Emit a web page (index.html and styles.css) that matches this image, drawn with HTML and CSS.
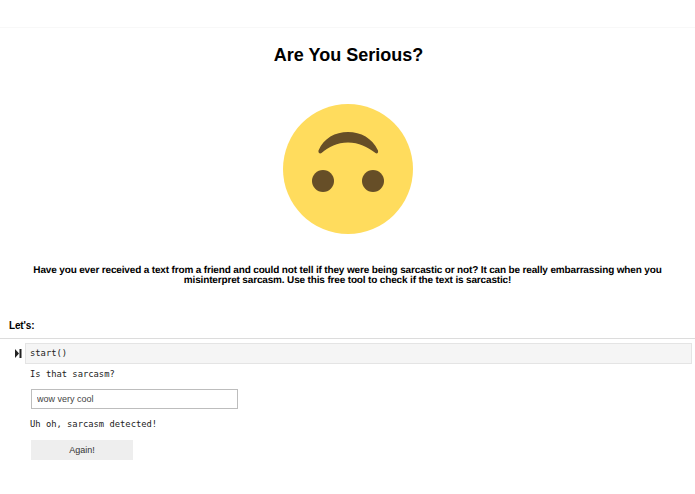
FILE: index.html
```html
<!DOCTYPE html>
<html lang="en">
<head>
    <meta charset="UTF-8">
    <meta name="viewport" content="width=device-width, initial-scale=1.0">
    <title>Are You Serious?</title>

    <link rel="stylesheet" href="styles.css">
</head>
<body>

    <div class="page">
        <h1 class="title">Are You Serious?</h1>

        <svg class="face" width="130" height="130" viewBox="0 0 130 130">
            <circle cx="65" cy="65" r="65" fill="#ffdc5d"/>
            <circle cx="40" cy="77" r="11" fill="#664e27"/>
            <circle cx="90" cy="77" r="11" fill="#664e27"/>
            <path d="M35.500 46.500 C41 34 52 28 65 28 C78 28 89 34 95 46.500 C95.500 49 94 50 92.500 49 C84 43 76 38.500 65 38.500 C54 38.500 46 43 38.500 49 C37 50 35 49 35.500 46.500 Z" fill="#664e27"/>
        </svg>

        <p class="intro">Have you ever received a text from a friend and could not tell if they were being sarcastic or not? It can be really embarrassing when you misinterpret sarcasm. Use this free tool to check if the text is sarcastic!</p>

        <h2 class="lets">Let's:</h2>
    </div>

    <div class="cell">
        <div class="cell-row">
            <svg class="run-icon" width="7" height="9" viewBox="0 0 7 9">
                <path d="M0 0 L4 4.500 L0 9 Z" fill="#222"/>
                <rect x="4.500" y="0" width="2" height="9" fill="#222"/>
            </svg>
            <div class="code">start()</div>
        </div>
        <div class="output">
            <div class="out-text">Is that sarcasm?</div>
            <input class="text-box" type="text" value="wow very cool">
            <div class="out-text detected">Uh oh, sarcasm detected!</div>
            <button class="again" type="button">Again!</button>
        </div>
    </div>

</body>
</html>
```

FILE: styles.css
```css
body {
    font-family: 'Liberation Sans', Arial, sans-serif;
    margin: 0;
    padding: 0;
    background-color: #fff;
    color: #000;
}

.page {
    margin-top: 27px;
    border-top: 1px solid #f8f8f8;
    display: flex;
    flex-direction: column;
    align-items: center;
}

.title {
    font-size: 18px;
    line-height: 22px;
    font-weight: bold;
    margin: 16px 0 0 2px;
}

.face {
    display: block;
    margin-top: 38px;
}

.intro {
    width: 640px;
    font-size: 10px;
    line-height: 10px;
    letter-spacing: -0.155px;
    text-rendering: geometricPrecision;
    font-weight: bold;
    text-align: center;
    margin: 32px 0 0 0;
}

.lets {
    align-self: flex-start;
    font-size: 10px;
    line-height: 12px;
    letter-spacing: -0.150px;
    font-weight: bold;
    margin: 34px 0 0 9px;
}

/* Notebook cell */
.cell {
    margin-top: 6px;
    border-top: 1px solid #dcdcdc;
    padding-top: 4px;
}

.cell-row {
    display: flex;
    align-items: center;
    padding: 0 3px 0 15px;
}

.run-icon {
    flex: none;
    margin-right: 3px;
}

.code {
    flex: 1;
    height: 19px;
    line-height: 19px;
    padding-left: 4px;
    background-color: #f5f5f5;
    border: 1px solid #e4e4e4;
    font-family: 'DejaVu Sans Mono', monospace;
    font-size: 8.800px;
    color: #222;
}

.output {
    padding-left: 30px;
}

.out-text {
    font-family: 'DejaVu Sans Mono', monospace;
    font-size: 8.800px;
    line-height: 12px;
    color: #222;
    margin-top: 4px;
}

.text-box {
    display: block;
    box-sizing: border-box;
    width: 207px;
    height: 20px;
    margin: 9px 0 0 1px;
    padding: 0 5px;
    border: 1px solid #bdbdbd;
    font-family: 'Liberation Sans', Arial, sans-serif;
    font-size: 9px;
    color: #444;
}

.detected {
    margin-top: 9px;
}

.again {
    display: block;
    width: 102px;
    height: 20px;
    margin: 10px 0 0 1px;
    padding: 0;
    border: none;
    background-color: #eeeeee;
    font-family: 'Liberation Sans', Arial, sans-serif;
    font-size: 9px;
    color: #333;
}
```
